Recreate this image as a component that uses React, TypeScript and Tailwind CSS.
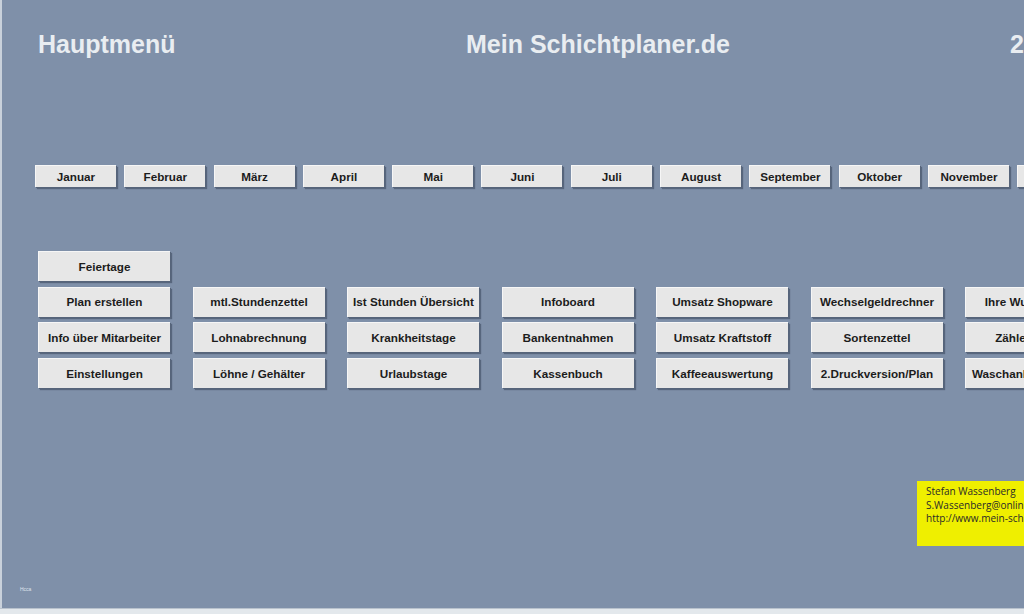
const months = ['Januar', 'Februar', 'März', 'April', 'Mai', 'Juni', 'Juli', 'August', 'September', 'Oktober', 'November', 'Dezember']

const rows: (string | null)[][] = [
  ['Feiertage', null, null, null, null, null, null],
  ['Plan erstellen', 'mtl.Stundenzettel', 'Ist Stunden Übersicht', 'Infoboard', 'Umsatz Shopware', 'Wechselgeldrechner', 'Ihre Wunschliste'],
  ['Info über Mitarbeiter', 'Lohnabrechnung', 'Krankheitstage', 'Bankentnahmen', 'Umsatz Kraftstoff', 'Sortenzettel', 'Zählerstände'],
  ['Einstellungen', 'Löhne / Gehälter', 'Urlaubstage', 'Kassenbuch', 'Kaffeeauswertung', '2.Druckversion/Plan', 'Waschanlage Umsatz'],
]

function XlButton({ label, className }: { label: string; className: string }) {
  return (
    <div
      className={`flex shrink-0 items-center justify-center whitespace-nowrap bg-[#e7e7e7] border-t border-l border-t-[#f6f6f6] border-l-[#f6f6f6] text-[11.7px] font-bold text-[#1c1c1c] shadow-[1px_1px_0_#56647a,2px_2px_1px_rgba(40,50,70,0.45)] ${className}`}
    >
      {label}
    </div>
  )
}

export default function App() {
  return (
    <div className="flex h-[614px] w-[1024px] flex-col overflow-hidden bg-[#e3e8ec] font-['Liberation_Sans',Arial,sans-serif]">
      <div className="flex h-[608px] flex-col border-l-2 border-l-[#c9d1db] bg-[#7f90a9]">
        {/* Kopfzeile */}
        <div className="mt-[30px] flex h-[28px] items-center whitespace-nowrap text-[25px] font-bold leading-[28px] text-[#e9edf1]">
          <div className="w-[464px] shrink-0 pl-[36px]">Hauptmenü</div>
          <div className="w-[544px] shrink-0">Mein Schichtplaner.de</div>
          <div className="shrink-0">2018</div>
        </div>

        {/* Monate */}
        <div className="ml-[33px] mt-[107px] flex gap-[8.3px]">
          {months.map((m) => (
            <XlButton key={m} label={m} className="h-[22px] w-[81px]" />
          ))}
        </div>

        {/* Funktionen */}
        <div className="ml-[36px] mt-[64px] grid grid-cols-[repeat(7,132px)] gap-x-[22.5px] gap-y-[5.7px]">
          {rows.map((row, r) =>
            row.map((label, c) =>
              label ? (
                <XlButton key={`${r}-${c}`} label={label} className="h-[30px] w-[132px]" />
              ) : (
                <div key={`${r}-${c}`} className="h-[30px]" />
              ),
            ),
          )}
        </div>

        {/* Kommentar */}
        <div className="ml-[915px] mt-[93px] h-[65px] w-[140px] shrink-0 whitespace-nowrap bg-[#efef00] pl-[9px] pt-[4px] font-['Open_Sans',sans-serif] text-[10px] leading-[13.5px] text-[#2a2a2a]">
          <div>Stefan Wassenberg</div>
          <div>S.Wassenberg@online.de</div>
          <div>http://www.mein-schichtplaner.de</div>
        </div>

        <div className="ml-[18px] mt-[40px] text-[5px] leading-[6px] text-[#dfe5ee]">Hcca</div>
      </div>
      <div className="h-px bg-[#b9c2cd]" />
    </div>
  )
}
